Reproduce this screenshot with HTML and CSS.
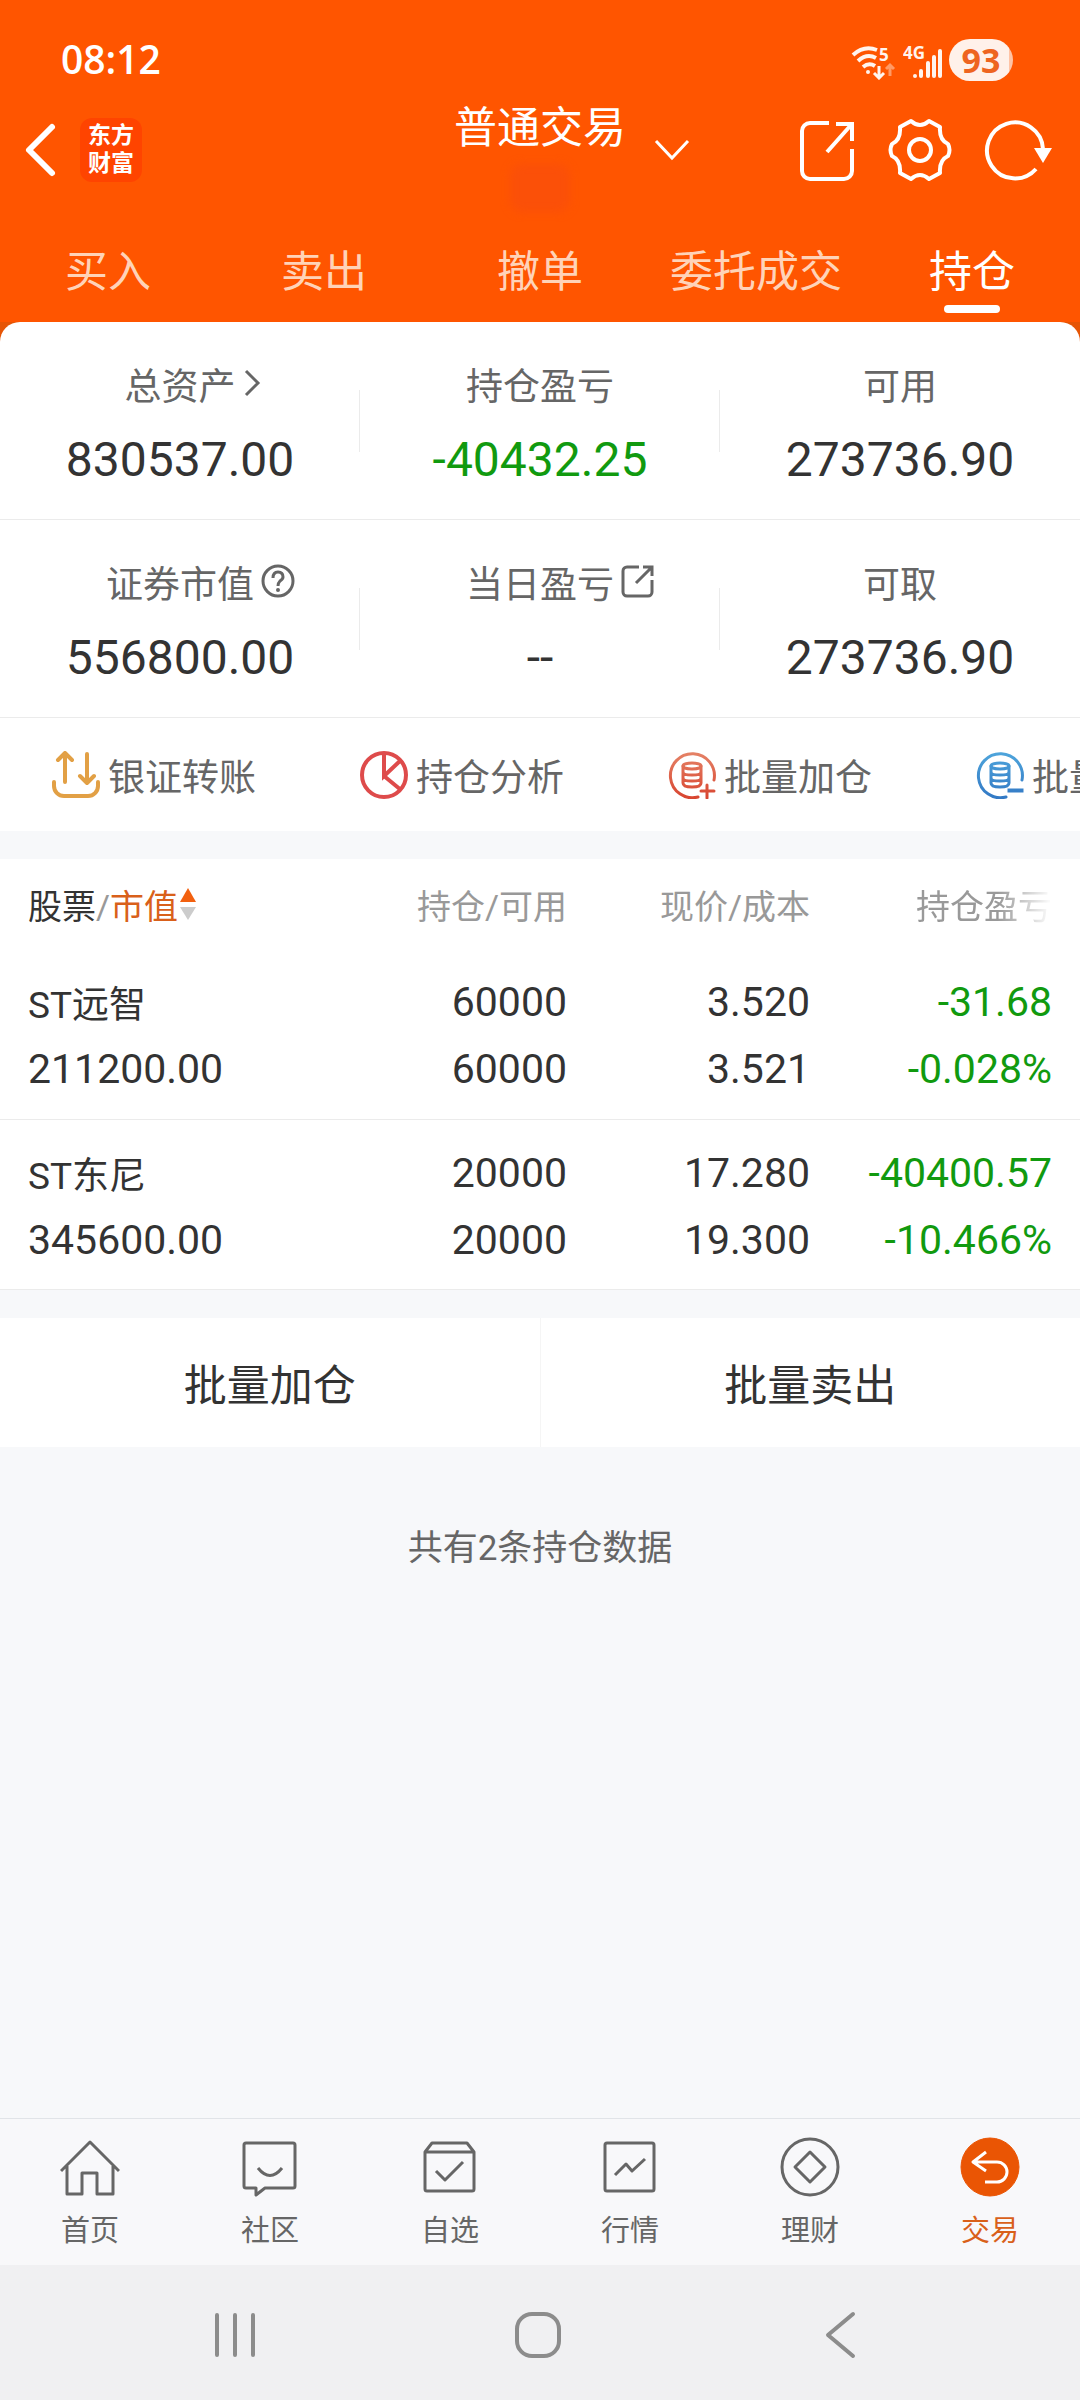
FILE: index.html
```html
<!DOCTYPE html>
<html lang="zh-CN">
  <head>
    <meta charset="utf-8">
    <title>持仓</title>
    <meta name="viewport" content="width=device-width">
<link rel="stylesheet" href="styles.css">
</head>
<body>

<header class="top">
  <div class="status">
    <span class="time">08:12</span>
    <div class="signals">
      <svg class="wifi" viewBox="0 0 46 40" fill="none" stroke="#fff4ee" stroke-width="4">
        <path d="M2 15Q13 5 26 10M7 21Q16 13 25 18M12 27Q18 22 24 26"/>
        <circle cx="17" cy="32" r="2" fill="#fff4ee" stroke="none"/>
        <path d="M28 26v11M23 33l5 5 5-5" stroke-width="3"/>
        <path d="M39 36V26M35 29l4-4 4 4" stroke="#ff9a66" stroke-width="3"/>
        <text class="tiny" x="28" y="21">5</text>
      </svg>
      <svg class="cell" viewBox="0 0 40 40" fill="#fff4ee">
        <circle cx="12" cy="36" r="2"/>
        <rect x="16" y="29" width="4" height="9" rx="2"/>
        <rect x="23" y="21" width="4" height="17" rx="2"/>
        <rect x="29" y="15" width="4" height="23" rx="2"/>
        <rect x="35" y="9" width="4" height="29" rx="2"/>
        <text class="tiny" x="0" y="19">4G</text>
      </svg>
      <span class="battery">93</span>
    </div>
  </div>

  <div class="titlebar">
    <div class="left">
      <button class="icon back" aria-label="返回">
        <svg width="28" height="56" viewBox="0 0 28 56" fill="none" stroke="#fff" stroke-width="6" stroke-linecap="round" stroke-linejoin="round"><path d="M24 5L1 28l23 23"/></svg>
      </button>
      <a class="logo" href="#">东方<br>财富</a>
    </div>
    <div class="title">
      <h1>普通交易</h1>
      <div class="account"></div>
    </div>
    <div class="right">
      <button class="icon switch" aria-label="切换账户">
        <svg width="36" height="24" viewBox="0 0 36 24" fill="none" stroke="#fff" stroke-width="3"><path d="M2 3l16 17L34 3"/></svg>
      </button>
      <button class="icon" aria-label="分享">
        <svg width="58" height="64" viewBox="0 0 58 64" fill="none" stroke="#fff" stroke-width="4"><path d="M31 5H12a8 8 0 0 0-8 8v40a8 8 0 0 0 8 8h34a8 8 0 0 0 8-8V31M38 6h16v17M53 7L29 34"/></svg>
      </button>
      <button class="icon" aria-label="设置">
        <svg width="64" height="64" viewBox="0 0 64 64" fill="none" stroke="#fff" stroke-width="4" stroke-linejoin="round"><path d="M23 3Q32 11 41 3L52 9Q51 22 60 26Q63 32 60 38Q51 42 52 55L41 61Q32 53 23 61L12 55Q13 42 4 38Q1 32 4 26Q13 22 12 9Z"/><circle cx="32" cy="32" r="11"/></svg>
      </button>
      <button class="icon" aria-label="刷新">
        <svg width="68" height="64" viewBox="0 0 68 64" fill="none" stroke="#fff" stroke-width="4"><path d="M59 31A28 28 0 1 0 52 51"/><path d="M50 30h18l-9 15z" fill="#fff" stroke="none"/></svg>
      </button>
    </div>
  </div>

  <nav class="tabs">
    <a href="#">买入</a>
    <a href="#">卖出</a>
    <a href="#">撤单</a>
    <a href="#">委托成交</a>
    <a href="#" class="on">持仓</a>
  </nav>
</header>

<main>
  <div class="summary">
    <div class="sheet">
      <div class="stats">
        <div class="stat">
          <a class="label" href="#">总资产<svg class="mark" viewBox="0 0 34 34" fill="none" stroke="#666" stroke-width="3"><path d="M3 5l12 12L3 29"/></svg></a>
          <div class="value">830537.00</div>
        </div>
        <div class="stat">
          <div class="label">持仓盈亏</div>
          <div class="value down">-40432.25</div>
        </div>
        <div class="stat">
          <div class="label">可用</div>
          <div class="value">273736.90</div>
        </div>
      </div>
      <div class="stats">
        <div class="stat">
          <a class="label" href="#">证券市值<svg class="mark" viewBox="0 0 34 34" fill="none" stroke="#666" stroke-width="3"><circle cx="17" cy="17" r="15"/><path d="M12 14q0-6 5-6t5 5q0 2-3 4-2 2-2 5"/><circle cx="17" cy="26" r="1" stroke-width="2"/></svg></a>
          <div class="value">556800.00</div>
        </div>
        <div class="stat">
          <a class="label" href="#">当日盈亏<svg class="mark" viewBox="0 0 34 34" fill="none" stroke="#666" stroke-width="3"><path d="M18 3H6a4 4 0 0 0-4 4v21a4 4 0 0 0 4 4h21a4 4 0 0 0 4-4V16M22 3h9v9M30 4L15 19"/></svg></a>
          <div class="value">--</div>
        </div>
        <div class="stat">
          <div class="label">可取</div>
          <div class="value">273736.90</div>
        </div>
      </div>
    </div>
  </div>

  <div class="quick">
    <a href="#">
      <svg viewBox="0 0 48 48" fill="none" stroke="#e2a045" stroke-width="4" stroke-linecap="round" stroke-linejoin="round"><path d="M13 31V3M6 9l7-7 7 7M35 3v28M28 25l7 7 7-7M2 31v4a10 10 0 0 0 10 10h24a10 10 0 0 0 10-10v-4"/></svg>
      银证转账
    </a>
    <a href="#">
      <svg viewBox="0 0 48 48" fill="none" stroke="#de4b4b" stroke-width="4"><circle cx="24" cy="24" r="22"/><path d="M24 2v23L41 9M24 25l17 14"/></svg>
      持仓分析
    </a>
    <a href="#">
      <svg viewBox="0 0 48 48" fill="none" stroke="url(#red)" stroke-width="3" stroke-linecap="round">
        <defs><linearGradient id="red" gradientUnits="userSpaceOnUse" x1="0" y1="0" x2="0" y2="48"><stop stop-color="#e58468"/><stop offset="1" stop-color="#d8442f"/></linearGradient></defs>
        <path d="M46 29A22 22 0 1 0 30 46"/>
        <ellipse cx="24" cy="15" rx="9" ry="3"/><path d="M15 15v17q0 4 9 4t9-4V15M15 21q0 3 9 3t9-3M15 27q0 3 9 3t9-3"/>
        <path d="M33 40h13M39 34v13"/>
      </svg>
      批量加仓
    </a>
    <a href="#">
      <svg viewBox="0 0 48 48" fill="none" stroke="url(#blue)" stroke-width="3" stroke-linecap="round">
        <defs><linearGradient id="blue" gradientUnits="userSpaceOnUse" x1="0" y1="0" x2="0" y2="48"><stop stop-color="#4fa6dc"/><stop offset="1" stop-color="#3278c4"/></linearGradient></defs>
        <path d="M46 29A22 22 0 1 0 30 46"/>
        <ellipse cx="24" cy="15" rx="9" ry="3"/><path d="M15 15v17q0 4 9 4t9-4V15M15 21q0 3 9 3t9-3M15 27q0 3 9 3t9-3"/>
        <rect x="33" y="39" width="13" height="1"/>
      </svg>
      批量卖出
    </a>
  </div>

  <table class="holdings">
    <thead>
      <tr>
        <th><b>股票</b>/<button class="sort">市值<svg width="16" height="34" viewBox="0 0 16 34"><path d="M8 1l8 14H0z" fill="#f2600f"/><path d="M8 33l8-13H0z" fill="#ccc"/></svg></button></th>
        <th>持仓/可用</th>
        <th>现价/成本</th>
        <th><span class="fade">持仓盈亏</span></th>
      </tr>
    </thead>
    <tbody>
      <tr>
        <td><span class="name">ST远智</span>211200.00</td>
        <td>60000<br>60000</td>
        <td>3.520<br>3.521</td>
        <td class="down">-31.68<br>-0.028%</td>
      </tr>
      <tr>
        <td><span class="name">ST东尼</span>345600.00</td>
        <td>20000<br>20000</td>
        <td>17.280<br>19.300</td>
        <td class="down">-40400.57<br>-10.466%</td>
      </tr>
    </tbody>
  </table>

  <div class="batch">
    <button>批量加仓</button>
    <button>批量卖出</button>
  </div>

  <p class="count">共有2条持仓数据</p>
</main>

<nav class="bottom">
  <a href="#">
    <svg viewBox="0 0 60 60"><path d="M1 34L30 5l29 29M7 29v28h15V36h15v21h16V29"/></svg>
    首页
  </a>
  <a href="#">
    <svg viewBox="0 0 60 60"><path d="M6 6h47q2 0 2 2v41q0 2-2 2H25l-9 7v-7H6q-2 0-2-2V8q0-2 2-2zM18 31q12 15 24 0"/></svg>
    社区
  </a>
  <a href="#">
    <svg viewBox="0 0 60 60"><path d="M5 15l7-9h35l7 9v37q0 2-2 2H7q-2 0-2-2zM5 15h49M16 34l9 9 18-18"/></svg>
    自选
  </a>
  <a href="#">
    <svg viewBox="0 0 60 60"><rect x="5" y="6" width="49" height="48" rx="2"/><path d="M15 38l11-11 6 7 13-12"/></svg>
    行情
  </a>
  <a href="#">
    <svg viewBox="0 0 60 60"><circle cx="30" cy="30" r="28"/><path d="M30 15l15 15-15 15-15-15z"/></svg>
    理财
  </a>
  <a href="#" class="on">
    <svg viewBox="0 0 60 60"><circle cx="30" cy="30" r="29" fill="#ea5504" stroke="#ea5504" stroke-width="1"/><path d="M26 15l-13 10 13 9M13 25h24a10 10 0 0 1 0 20H25" stroke="#fff"/></svg>
    交易
  </a>
</nav>

<div class="system">
  <button aria-label="最近任务"><svg width="48" height="48" viewBox="0 0 48 48"><path d="M6 4v40M24 4v40M42 4v40"/></svg></button>
  <button aria-label="主屏幕"><svg width="48" height="48" viewBox="0 0 48 48"><rect x="3" y="3" width="42" height="42" rx="15"/></svg></button>
  <button aria-label="返回"><svg width="48" height="48" viewBox="0 0 48 48"><path d="M36 3L11 24l25 21"/></svg></button>
</div>

</body>
</html>
```
FILE: styles.css
```css
* {box-sizing: border-box}
body {
  margin: 0;
  min-height: 100vh;
  display: flex;
  flex-direction: column;
  background: #f7f8fa;
  color: #333;
  font-family: Roboto, "Noto Sans CJK SC", sans-serif;
  overflow-x: hidden;
}
a {
  color: inherit;
  text-decoration: none;
}
button {
  margin: 0; padding: 0;
  border: 0;
  background: none;
  color: inherit;
  font: inherit;
}
svg {
  display: block;
  flex: none;
}

/* orange header */
.top {
  background: #ff5500;
  color: #fff;
}
.status {
  display: flex;
  justify-content: space-between;
  align-items: center;
  height: 100px;
  padding: 20px 67px 0 61px;
  font-family: "Open Sans", sans-serif;
}
.time {
  font-size: 39px;
  font-weight: 600;
  line-height: 50px;
  padding-bottom: 2px;
}
.signals {
  display: flex;
  align-items: center;
  gap: 6px;
}
.wifi {
  width: 46px;
  height: 40px;
}
.cell {
  width: 40px;
  height: 40px;
}
.tiny {
  font-size: 17px;
  font-weight: 700;
  fill: #fff4ee;
  stroke: none;
}
.battery {
  width: 64px;
  height: 42px;
  border-radius: 21px;
  background: linear-gradient(to right, #fff1ea 93%, #ffc3a5 93%);
  color: #ee6420;
  font-size: 34px;
  font-weight: 700;
  line-height: 42px;
  text-align: center;
}
.titlebar {
  display: grid;
  grid-template-columns: 1fr auto 1fr;
  grid-template-rows: 100px;
  padding: 0 28px;
}
.left, .right {
  display: flex;
  align-items: center;
}
.right {
  gap: 32px;
  justify-content: flex-end;
}
.switch {
  margin-right: auto;
  margin-left: 28px;
}
.back svg {
  overflow: visible;
}
.logo {
  width: 62px;
  height: 64px;
  margin-left: 24px;
  padding-top: 4px;
  border-radius: 12px;
  background: #ff4400;
  font-size: 23px;
  font-weight: 700;
  line-height: 28px;
  text-align: center;
}
h1 {
  margin: 0;
  font-size: 43px;
  font-weight: 400;
  line-height: 56px;
}
.account {
  width: 60px;
  height: 48px;
  margin: 8px auto 0;
  border-radius: 12px;
  background: #fb5008;
  filter: blur(4px);
}
.tabs {
  display: flex;
  height: 122px;
  padding-top: 39px;
}
.tabs a {
  flex: 1;
  color: #ffd3b8;
  font-size: 43px;
  line-height: 66px;
  text-align: center;
}
.tabs .on {
  color: #fff;
}
.tabs .on::after {
  content: "";
  display: block;
  width: 56px;
  height: 8px;
  margin: 0 auto;
  border-radius: 4px;
  background: #fff;
}

/* account totals */
.summary {
  background: #e65505;
}
.sheet {
  border-radius: 20px 20px 0 0;
  background: #fff;
}
.stats {
  display: flex;
  align-items: center;
  height: 198px;
  border-bottom: 1px solid #ebebeb;
}
.stat {
  flex: 1;
  padding-top: 10px;
  text-align: center;
  background: linear-gradient(#ebebeb, #ebebeb) right center / 1px 62px no-repeat;
}
.stat:last-child {
  background: none;
}
.label {
  display: inline-block;
  position: relative;
  color: #666;
  font-size: 37px;
  line-height: 56px;
}
.mark {
  position: absolute;
  left: 100%;
  top: 6px;
  width: 34px;
  height: 34px;
  margin-left: 7px;
}
.value {
  margin-top: 12px;
  font-size: 48px;
  line-height: 64px;
}
.down {
  color: #119a0f;
}

.quick {
  display: flex;
  gap: 104px;
  height: 113px;
  padding-left: 52px;
  background: #fff;
  overflow: hidden;
}
.quick a {
  display: flex;
  flex: none;
  align-items: center;
  gap: 8px;
  color: #666;
  font-size: 37px;
}
.quick svg {
  width: 48px;
  height: 48px;
}

/* positions */
.holdings {
  width: 100%;
  margin-top: 28px;
  border-collapse: collapse;
  table-layout: fixed;
  background: #fff;
}
.holdings th {
  width: 22.5%;
  height: 90px;
  padding: 0;
  color: #999;
  font-size: 34px;
  font-weight: 400;
  text-align: right;
}
.holdings th:first-child {
  width: 30%;
}
.holdings th:last-child {
  width: 25%;
}
.holdings td {
  height: 170px;
  padding: 20px 0 15px;
  border-bottom: 1px solid #ebebeb;
  font-size: 41px;
  line-height: 67px;
  text-align: right;
}
.holdings th:first-child, .holdings td:first-child {
  padding-left: 28px;
  text-align: left;
}
.holdings th:last-child, .holdings td:last-child {
  padding-right: 28px;
}
.holdings b {
  color: #333;
  font-weight: 400;
}
.sort {
  display: inline-flex;
  align-items: center;
  gap: 2px;
  color: #d9601a;
}
.name {
  display: block;
  padding-top: 6px;
  font-size: 37px;
  line-height: 61px;
}
.fade {
  -webkit-mask-image: linear-gradient(to right, #000 60%, transparent);
  mask-image: linear-gradient(to right, #000 60%, transparent);
}

.batch {
  display: flex;
  margin-top: 28px;
  background: #fff;
}
.batch button {
  flex: 1;
  height: 129px;
  font-size: 43px;
}
.batch button + button {
  border-left: 1px solid #f5f5f5;
}
.count {
  margin: 74px 0;
  color: #666;
  font-size: 35px;
  line-height: 56px;
  text-align: center;
}

/* app tabs */
.bottom {
  display: flex;
  height: 147px;
  margin-top: auto;
  padding-top: 18px;
  border-top: 1px solid #e1e4e8;
  background: #f8f8fa;
}
.bottom a {
  flex: 1;
  color: #666;
  font-size: 29px;
  line-height: 68px;
  text-align: center;
}
.bottom svg {
  width: 60px;
  height: 60px;
  margin: 0 auto;
  fill: none;
  stroke: #666;
  stroke-width: 3px;
  stroke-linejoin: round;
}
.bottom .on {
  color: #d9601a;
}

/* phone buttons */
.system {
  display: flex;
  height: 135px;
  padding: 4px 88px 0 84px;
  background: #f0f0f2;
}
.system button {
  display: flex;
  flex: 1;
  align-items: center;
  justify-content: center;
}
.system svg {
  fill: none;
  stroke: #8c8c8c;
  stroke-width: 4px;
  stroke-linecap: round;
  stroke-linejoin: round;
}
```
